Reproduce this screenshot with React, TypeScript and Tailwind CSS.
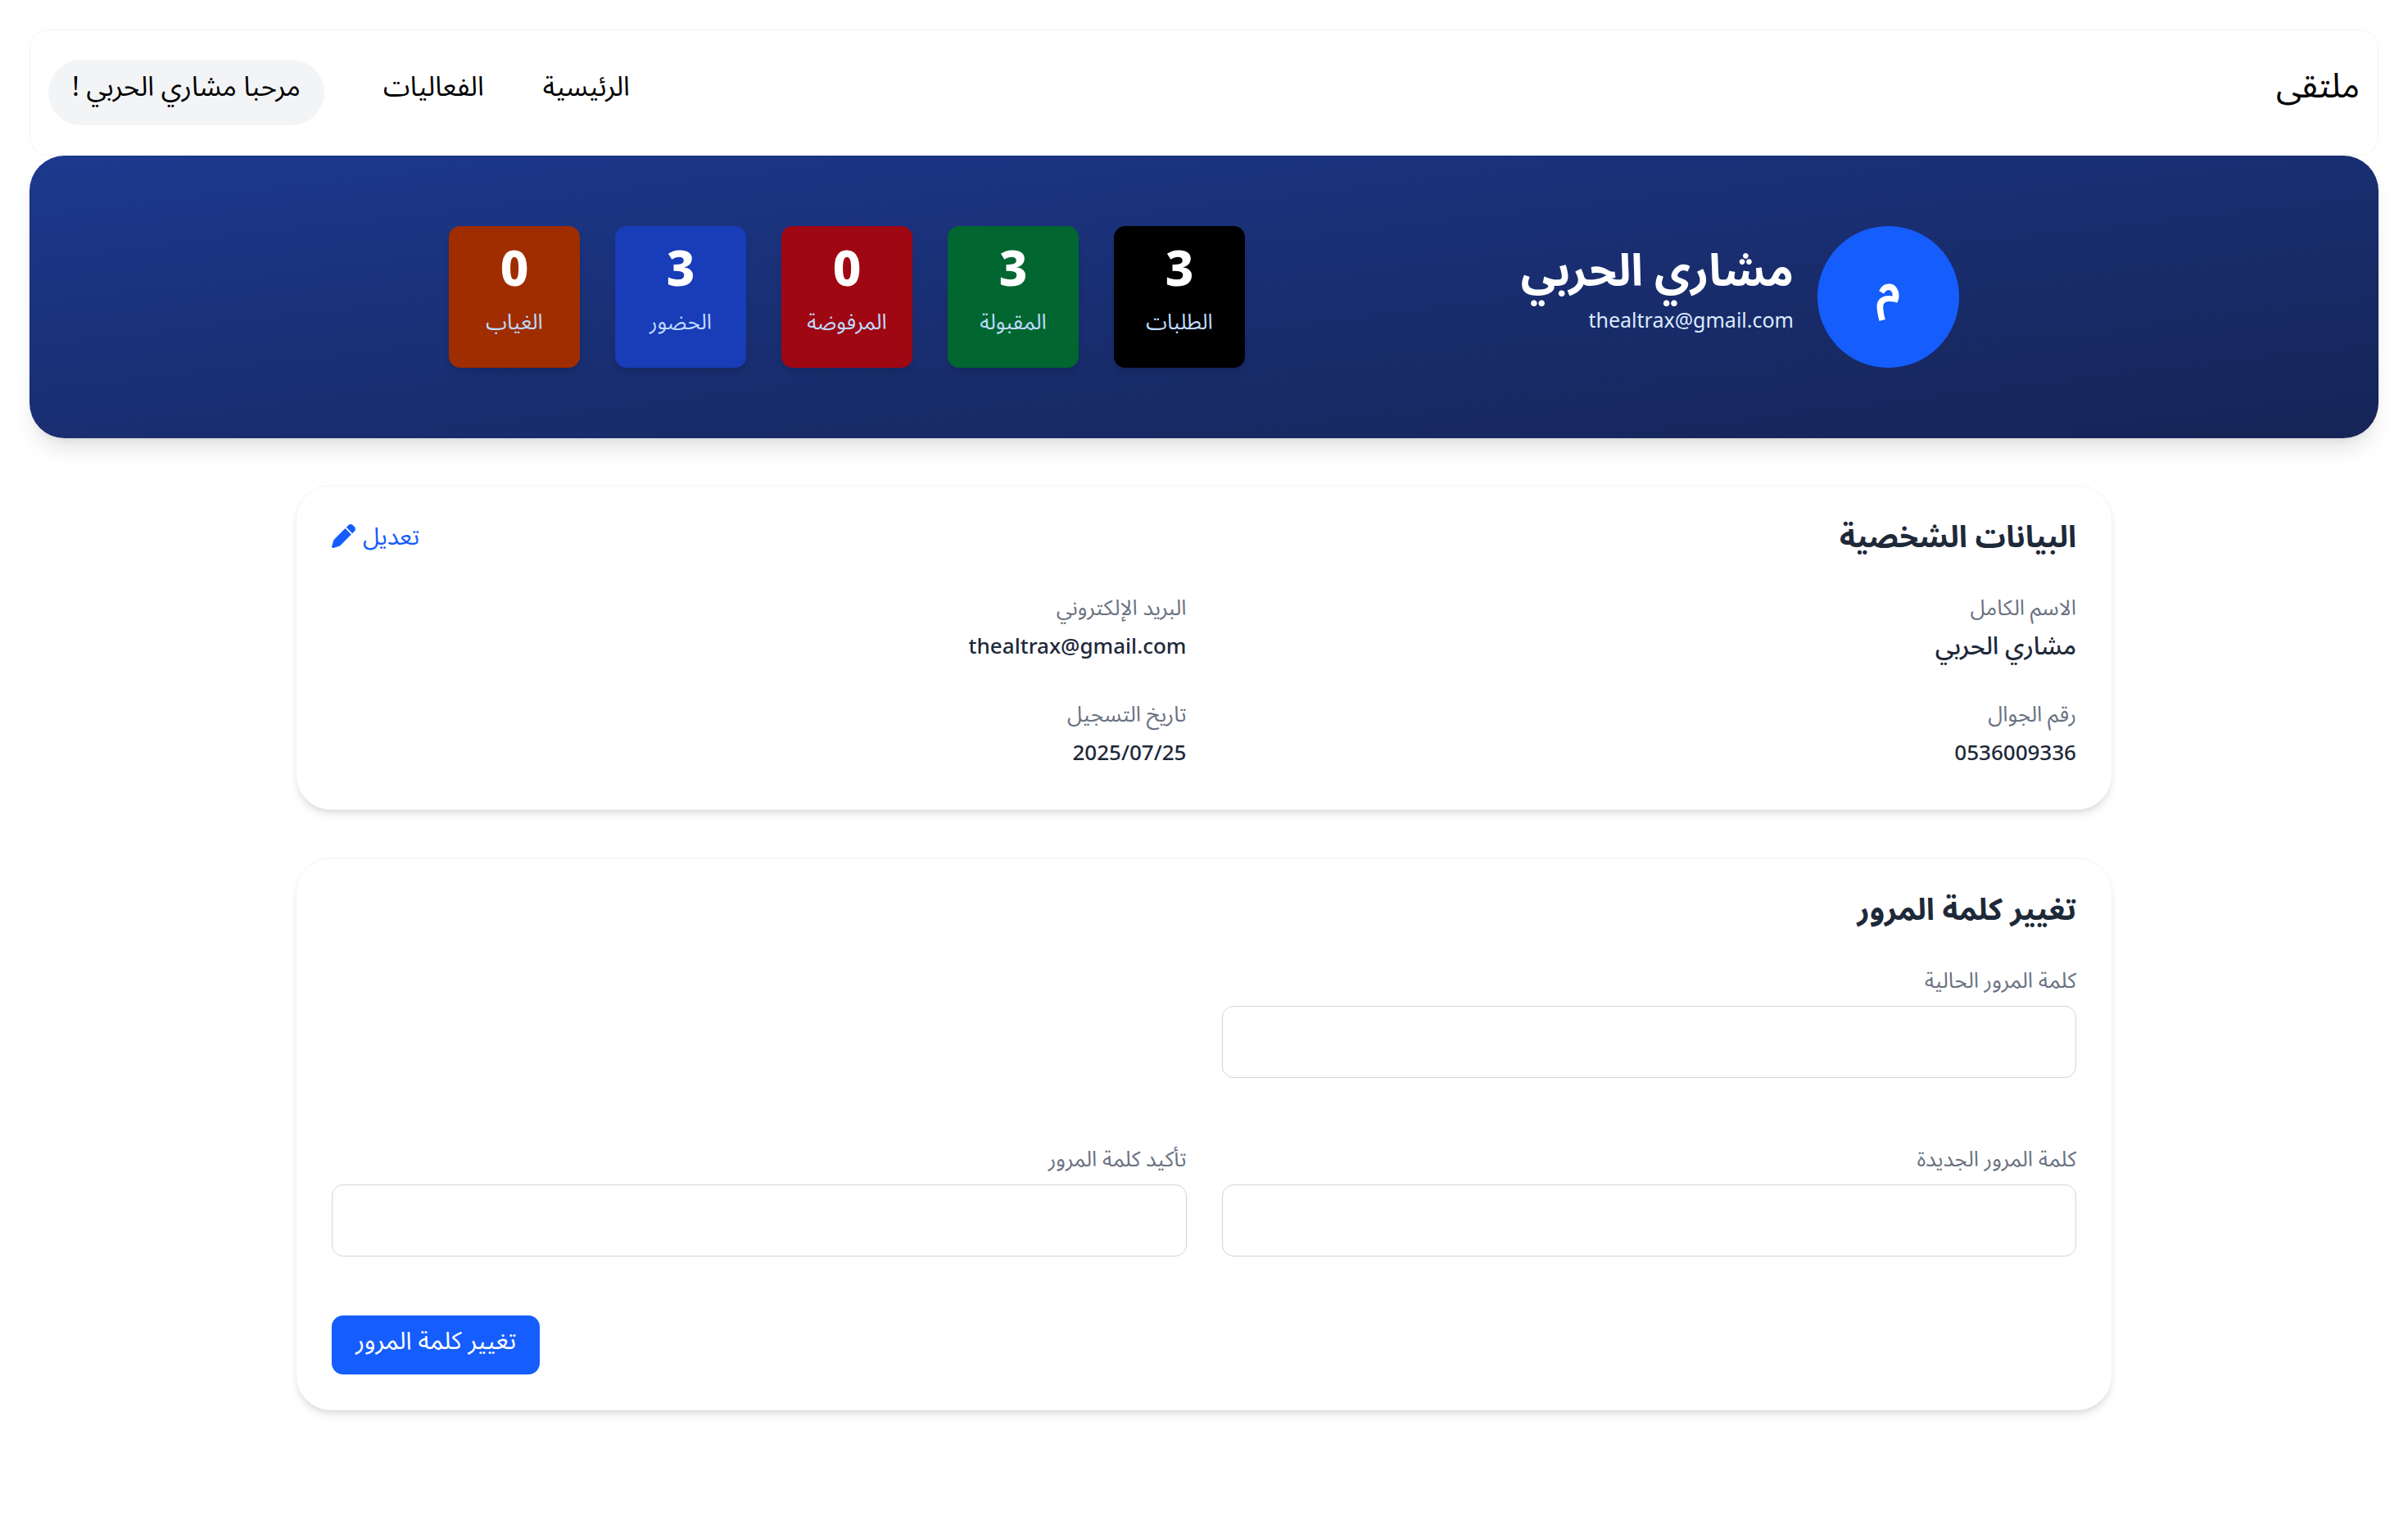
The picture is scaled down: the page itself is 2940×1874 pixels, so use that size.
import type { FormEvent } from "react";

const stats = [
  { label: "الطلبات", value: 3, color: "bg-black" },
  { label: "المقبولة", value: 3, color: "bg-[#016630]" },
  { label: "المرفوضة", value: 0, color: "bg-[#9f0712]" },
  { label: "الحضور", value: 3, color: "bg-[#193cb8]" },
  { label: "الغياب", value: 0, color: "bg-[#9f2d00]" },
];

const details = [
  { label: "الاسم الكامل", value: "مشاري الحربي", size: "text-[30px]" },
  { label: "البريد الإلكتروني", value: "thealtrax@gmail.com", size: "text-[26px]" },
  { label: "رقم الجوال", value: "0536009336", size: "text-[26px]" },
  { label: "تاريخ التسجيل", value: "2025/07/25", size: "text-[26px]" },
];

const card =
  "rounded-[43px] border border-gray-100 bg-white px-[43px] pt-[43px] shadow-[0_7px_11px_-2px_rgba(0,0,0,0.1),0_4px_7px_-4px_rgba(0,0,0,0.1)]";

function PencilIcon() {
  return (
    <svg viewBox="0 0 512 512" fill="currentColor" className="size-[29px]" aria-hidden="true">
      <path d="M362.7 19.3L314.3 67.7 444.3 197.7l48.4-48.4c25-25 25-65.5 0-90.5L453.3 19.3c-25-25-65.5-25-90.5 0zm-71 71L58.6 323.5c-10.4 10.4-18 23.3-22.2 37.4L1 481.2C-1.5 489.7 .8 498.8 7 505s15.3 8.5 23.7 6.1l120.3-35.4c14.1-4.2 27-11.8 37.4-22.2L421.7 220.3 291.7 90.3z" />
    </svg>
  );
}

function NavBar() {
  return (
    <header className="flex items-center justify-between rounded-[22px] border border-gray-100 bg-white px-[22px] py-9 text-black">
      <a href="#" className="pb-5 text-[42px] leading-12">
        ملتقى
      </a>
      <nav className="flex items-center gap-[72px] text-[33px] leading-10">
        <a href="#" className="pt-3 pb-7">
          الرئيسية
        </a>
        <a href="#events" className="pt-3 pb-7">
          الفعاليات
        </a>
        <button type="button" className="rounded-full bg-gray-100 px-[29px] pt-3 pb-7">
          مرحبا مشاري الحربي !
        </button>
      </nav>
    </header>
  );
}

function Hero() {
  return (
    <section className="rounded-[43px] bg-linear-to-br from-[#1c398e] to-[#162456] py-[86px] shadow-[0_18px_27px_-5px_rgba(0,0,0,0.1),0_7px_11px_-7px_rgba(0,0,0,0.1)]">
      <div className="mx-auto flex max-w-[1844px] justify-between">
        <div className="flex items-center gap-[29px]">
          <div className="flex size-[173px] items-center justify-center rounded-full bg-[#155dfc] pb-7 text-[54px] leading-[54px] font-bold text-white">
            م
          </div>
          <div className="pb-5">
            <h1 className="text-[54px] leading-[60px] font-bold text-white">مشاري الحربي</h1>
            <p className="mt-3.5 text-[25px] leading-9 text-[#dbeafe]">thealtrax@gmail.com</p>
          </div>
        </div>
        <dl className="flex gap-[43px]">
          {stats.map((s) => (
            <div
              key={s.label}
              className={`flex w-40 flex-col-reverse justify-end gap-[18px] rounded-[14px] pt-5 text-center shadow-[0_7px_11px_-2px_rgba(0,0,0,0.1),0_4px_7px_-4px_rgba(0,0,0,0.1)] ${s.color}`}
            >
              <dt className="text-[26px] leading-9 text-[#bedbff]">{s.label}</dt>
              <dd className="text-[60px] leading-[60px] font-extrabold text-white">{s.value}</dd>
            </div>
          ))}
        </dl>
      </div>
    </section>
  );
}

function PersonalData() {
  return (
    <section className={`${card} pb-[52px]`}>
      <div className="flex items-center justify-between">
        <h2 className="text-[37px] leading-9 font-bold">البيانات الشخصية</h2>
        <button type="button" className="flex items-center gap-[9px] text-[29px] leading-9 text-[#155dfc]">
          تعديل
          <PencilIcon />
        </button>
      </div>
      <dl className="mt-[51px] grid grid-cols-2 gap-x-[43px] gap-y-[47px]">
        {details.map((d) => (
          <div key={d.label}>
            <dt className="text-[26px] leading-9 text-[#6a7282]">{d.label}</dt>
            <dd className={`mt-[11px] leading-9 font-medium ${d.size}`}>{d.value}</dd>
          </div>
        ))}
      </dl>
    </section>
  );
}

function PasswordField({ id, label, autoComplete }: { id: string; label: string; autoComplete: string }) {
  return (
    <div>
      <label htmlFor={id} className="block text-[26px] leading-9 text-[#6a7282]">
        {label}
      </label>
      <input
        id={id}
        type="password"
        autoComplete={autoComplete}
        className="mt-3.5 block h-[88px] w-full rounded-[14px] border border-[#d1d5dc] bg-white px-[29px] text-[30px]"
      />
    </div>
  );
}

function PasswordForm() {
  return (
    <section className={`${card} pb-[43px]`}>
      <h2 className="text-[37px] leading-9 font-bold">تغيير كلمة المرور</h2>
      <form className="mt-[51px]" onSubmit={(e: FormEvent) => e.preventDefault()}>
        <div className="grid grid-cols-2 gap-x-[43px]">
          <PasswordField id="current" label="كلمة المرور الحالية" autoComplete="current-password" />
        </div>
        <div className="mt-20 grid grid-cols-2 gap-x-[43px]">
          <PasswordField id="new" label="كلمة المرور الجديدة" autoComplete="new-password" />
          <PasswordField id="confirm" label="تأكيد كلمة المرور" autoComplete="new-password" />
        </div>
        <div className="mt-18 flex justify-end">
          <button
            type="submit"
            className="rounded-[14px] bg-[#155dfc] px-[29px] pt-2 pb-5 text-[30px] leading-11 text-white"
          >
            تغيير كلمة المرور
          </button>
        </div>
      </form>
    </section>
  );
}

export default function App() {
  return (
    <div
      dir="rtl"
      lang="ar"
      className="min-h-screen bg-white p-9 font-['Noto_Sans','Noto_Sans_Arabic','DejaVu_Sans',sans-serif] text-[#1e2939]"
    >
      <NavBar />
      <Hero />
      <main className="mx-auto mt-[57px] flex max-w-[2304px] flex-col gap-[58px] px-[43px]">
        <PersonalData />
        <PasswordForm />
      </main>
    </div>
  );
}
